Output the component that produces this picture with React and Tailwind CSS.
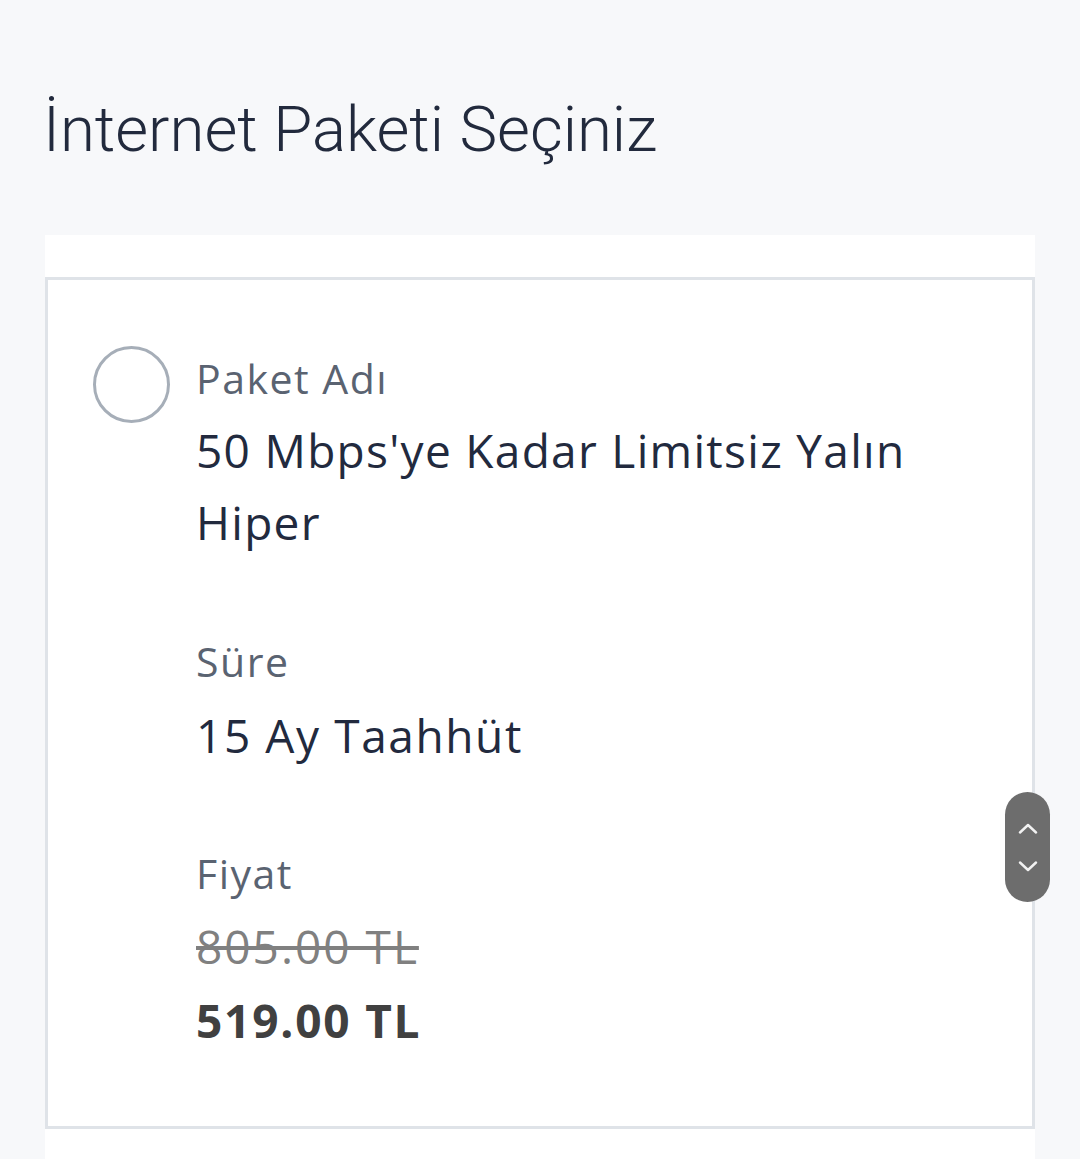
import React from "react";

export default function App() {
  return (
    <div className="relative h-[1159px] overflow-hidden bg-[#f7f8fa] px-[45px] pt-[94px]" style={{ fontFamily: "'Open Sans', 'Noto Sans', sans-serif" }}>
      <h1 className="-ml-[2px] text-[63.5px] leading-[72px] font-light text-[#222a3d]" style={{ fontFamily: "Roboto, 'Noto Sans', sans-serif" }}>
        İnternet Paketi Seçiniz
      </h1>
      <div className="mt-[69px] bg-white pt-[42px]">
        <div className="flex border-[3px] border-[#dfe3e8] pl-[45px] pr-[45px] pt-[62px] pb-[70px]">
          <div className="mt-[4px] h-[77px] w-[77px] shrink-0 rounded-full border-[3px] border-[#a6aeb8]" />
          <div className="ml-[26px] flex-1">
            <div className="text-[41px] leading-[72px] tracking-[1.5px] text-[#5a6371]">Paket Adı</div>
            <div className="text-[46px] leading-[72px] tracking-[1.3px] text-[#222a3e]">50 Mbps'ye Kadar Limitsiz Yalın Hiper</div>
            <div className="mt-[67px] text-[41px] leading-[72px] tracking-[1.5px] text-[#5a6371]">Süre</div>
            <div className="mt-[2px] text-[46px] leading-[72px] tracking-[1.6px] text-[#222a3e]">15 Ay Taahhüt</div>
            <div className="mt-[66px] text-[41px] leading-[72px] tracking-[1.5px] text-[#5a6371]">Fiyat</div>
            <div className="mt-[1px] text-[46px] leading-[72px] tracking-[2px] text-[#808080] line-through decoration-[4px]">805.00 TL</div>
            <div className="mt-[2px] text-[46px] leading-[72px] tracking-[1.8px] font-bold text-[#404040]">519.00 TL</div>
          </div>
        </div>
        <div className="h-[80px] bg-white" />
      </div>
      <div className="absolute left-[1005px] top-[792px] flex h-[110px] w-[45px] flex-col items-center justify-center gap-[27px] rounded-full bg-[#6d6d6d]">
        <svg width="20" height="11" viewBox="0 0 20 11" fill="none" stroke="#f2f2f2" strokeWidth="2.4" strokeLinecap="round" strokeLinejoin="round">
          <path d="M2 9.5 L10 2 L18 9.5" />
        </svg>
        <svg width="20" height="11" viewBox="0 0 20 11" fill="none" stroke="#f2f2f2" strokeWidth="2.4" strokeLinecap="round" strokeLinejoin="round">
          <path d="M2 1.5 L10 9 L18 1.5" />
        </svg>
      </div>
    </div>
  );
}
